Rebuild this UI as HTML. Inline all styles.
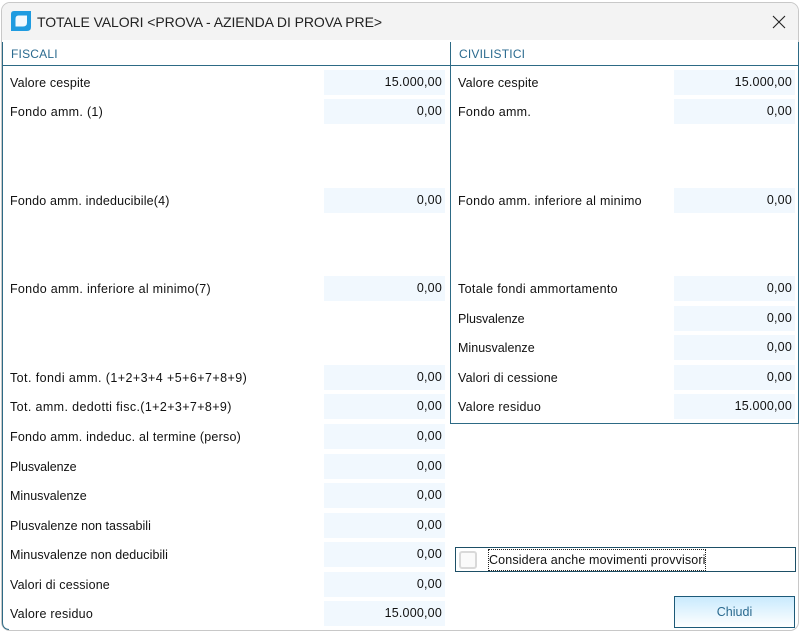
<!DOCTYPE html>
<html>
<head>
<meta charset="utf-8">
<style>
html,body{margin:0;padding:0;width:800px;height:632px;overflow:hidden;background:#fff}
body{position:relative;font-family:"Liberation Sans",sans-serif;font-size:12.5px;color:#111}
.abs{position:absolute}
.l{position:absolute;white-space:nowrap;height:16px;line-height:16px}
.f{position:absolute;width:121px;height:25px;line-height:25px;background:#f1f8fe;text-align:right;box-sizing:border-box;padding-right:3px;letter-spacing:.2px}
.h{position:absolute;color:#2a6a8f;height:16px;line-height:16px;font-size:12px;letter-spacing:.2px}
</style>
</head>
<body>
<div class="abs" style="left:1px;top:2px;width:798px;height:629px;background:#fff;border:1px solid #c8c8c8;border-radius:9px;box-sizing:border-box;overflow:hidden">
  <div class="abs" style="left:0;top:0;width:800px;height:37px;background:#f3f3f3"></div>
</div>
<svg class="abs" style="left:11px;top:11px" width="20" height="20" viewBox="0 0 20 20"><path d="M3 0H20V16Q20 20 16 20H0V3Q0 0 3 0Z" fill="#1f9be0"/><path d="M7.5 4.5H16V11.5Q16 15.5 12 15.5H4.5V8Q4.5 4.5 7.5 4.5Z" fill="#f2f9fe"/></svg>
<div class="abs" style="left:37px;top:13px;height:18px;line-height:18px;font-size:14px;color:#222;white-space:nowrap;letter-spacing:-.07px">TOTALE VALORI &lt;PROVA - AZIENDA DI PROVA PRE&gt;</div>
<svg class="abs" style="left:772px;top:15px" width="14" height="14" viewBox="0 0 14 14"><path d="M1 1L13 13M13 1L1 13" stroke="#222" stroke-width="1.1" fill="none"/></svg>

<svg class="abs" style="left:0;top:600px" width="12" height="32" viewBox="0 0 12 32"><path d="M2.5 0V22Q2.5 29 9 29.5" stroke="#2d6a85" stroke-width="1" fill="none"/></svg>
<div class="abs" style="left:2px;top:42px;width:1px;height:558px;background:#2d6a85"></div>
<div class="abs" style="left:2px;top:65px;width:797px;height:1px;background:#2d6a85"></div>
<div class="abs" style="left:450px;top:42px;width:1px;height:382px;background:#2d6a85"></div>
<div class="abs" style="left:450px;top:423px;width:349px;height:1px;background:#2d6a85"></div>
<div class="abs" style="left:798px;top:42px;width:1px;height:382px;background:#2d6a85"></div>

<div class="h" style="left:11px;top:46px">FISCALI</div>
<div class="h" style="left:459px;top:46px">CIVILISTICI</div>

<div class="l" style="left:10px;top:75px;letter-spacing:.17px">Valore cespite</div><div class="f" style="left:324px;top:70px">15.000,00</div>
<div class="l" style="left:10px;top:104px;letter-spacing:.3px">Fondo amm. (1)</div><div class="f" style="left:324px;top:99px">0,00</div>
<div class="l" style="left:10px;top:193px;letter-spacing:.18px">Fondo amm. indeducibile(4)</div><div class="f" style="left:324px;top:188px">0,00</div>
<div class="l" style="left:10px;top:281px;letter-spacing:.3px">Fondo amm. inferiore al minimo(7)</div><div class="f" style="left:324px;top:276px">0,00</div>
<div class="l" style="left:10px;top:370px;letter-spacing:.43px">Tot. fondi amm. (1+2+3+4 +5+6+7+8+9)</div><div class="f" style="left:324px;top:365px">0,00</div>
<div class="l" style="left:10px;top:399px;letter-spacing:.38px">Tot. amm. dedotti fisc.(1+2+3+7+8+9)</div><div class="f" style="left:324px;top:394px">0,00</div>
<div class="l" style="left:10px;top:429px;letter-spacing:.23px">Fondo amm. indeduc. al termine (perso)</div><div class="f" style="left:324px;top:424px">0,00</div>
<div class="l" style="left:10px;top:459px;letter-spacing:-.08px">Plusvalenze</div><div class="f" style="left:324px;top:454px">0,00</div>
<div class="l" style="left:10px;top:488px;letter-spacing:.02px">Minusvalenze</div><div class="f" style="left:324px;top:483px">0,00</div>
<div class="l" style="left:10px;top:518px;letter-spacing:.02px">Plusvalenze non tassabili</div><div class="f" style="left:324px;top:513px">0,00</div>
<div class="l" style="left:10px;top:547px;letter-spacing:.06px">Minusvalenze non deducibili</div><div class="f" style="left:324px;top:542px">0,00</div>
<div class="l" style="left:10px;top:577px;letter-spacing:.16px">Valori di cessione</div><div class="f" style="left:324px;top:572px">0,00</div>
<div class="l" style="left:10px;top:606px;letter-spacing:.24px">Valore residuo</div><div class="f" style="left:324px;top:601px">15.000,00</div>

<div class="l" style="left:458px;top:75px;letter-spacing:.17px">Valore cespite</div><div class="f" style="left:674px;top:70px">15.000,00</div>
<div class="l" style="left:458px;top:104px;letter-spacing:.3px">Fondo amm.</div><div class="f" style="left:674px;top:99px">0,00</div>
<div class="l" style="left:458px;top:193px;letter-spacing:.27px">Fondo amm. inferiore al minimo</div><div class="f" style="left:674px;top:188px">0,00</div>
<div class="l" style="left:458px;top:281px;letter-spacing:.34px">Totale fondi ammortamento</div><div class="f" style="left:674px;top:276px">0,00</div>
<div class="l" style="left:458px;top:311px;letter-spacing:-.08px">Plusvalenze</div><div class="f" style="left:674px;top:306px">0,00</div>
<div class="l" style="left:458px;top:340px;letter-spacing:.02px">Minusvalenze</div><div class="f" style="left:674px;top:335px">0,00</div>
<div class="l" style="left:458px;top:370px;letter-spacing:.16px">Valori di cessione</div><div class="f" style="left:674px;top:365px">0,00</div>
<div class="l" style="left:458px;top:399px;letter-spacing:.24px">Valore residuo</div><div class="f" style="left:674px;top:394px">15.000,00</div>

<div class="abs" style="left:455px;top:547px;width:341px;height:25px;border:1px solid #1d4f66;box-sizing:border-box"></div>
<div class="abs" style="left:459px;top:551px;width:18px;height:18px;border:2px solid #d9d9d9;border-radius:3px;box-sizing:border-box;background:#fafafa"></div>
<div class="abs" style="left:488px;top:549px;width:218px;height:22px;border:1px dotted #222;box-sizing:border-box"></div>
<div class="l" style="left:489px;top:552px;letter-spacing:.13px">Considera anche movimenti provvisori</div>

<div class="abs" style="left:674px;top:596px;width:121px;height:32px;border:1px solid #1d5a78;box-sizing:border-box;background:linear-gradient(#c9eafd,#ffffff);text-align:center;line-height:30px;color:#2a6a8f">Chiudi</div>
</body>
</html>
